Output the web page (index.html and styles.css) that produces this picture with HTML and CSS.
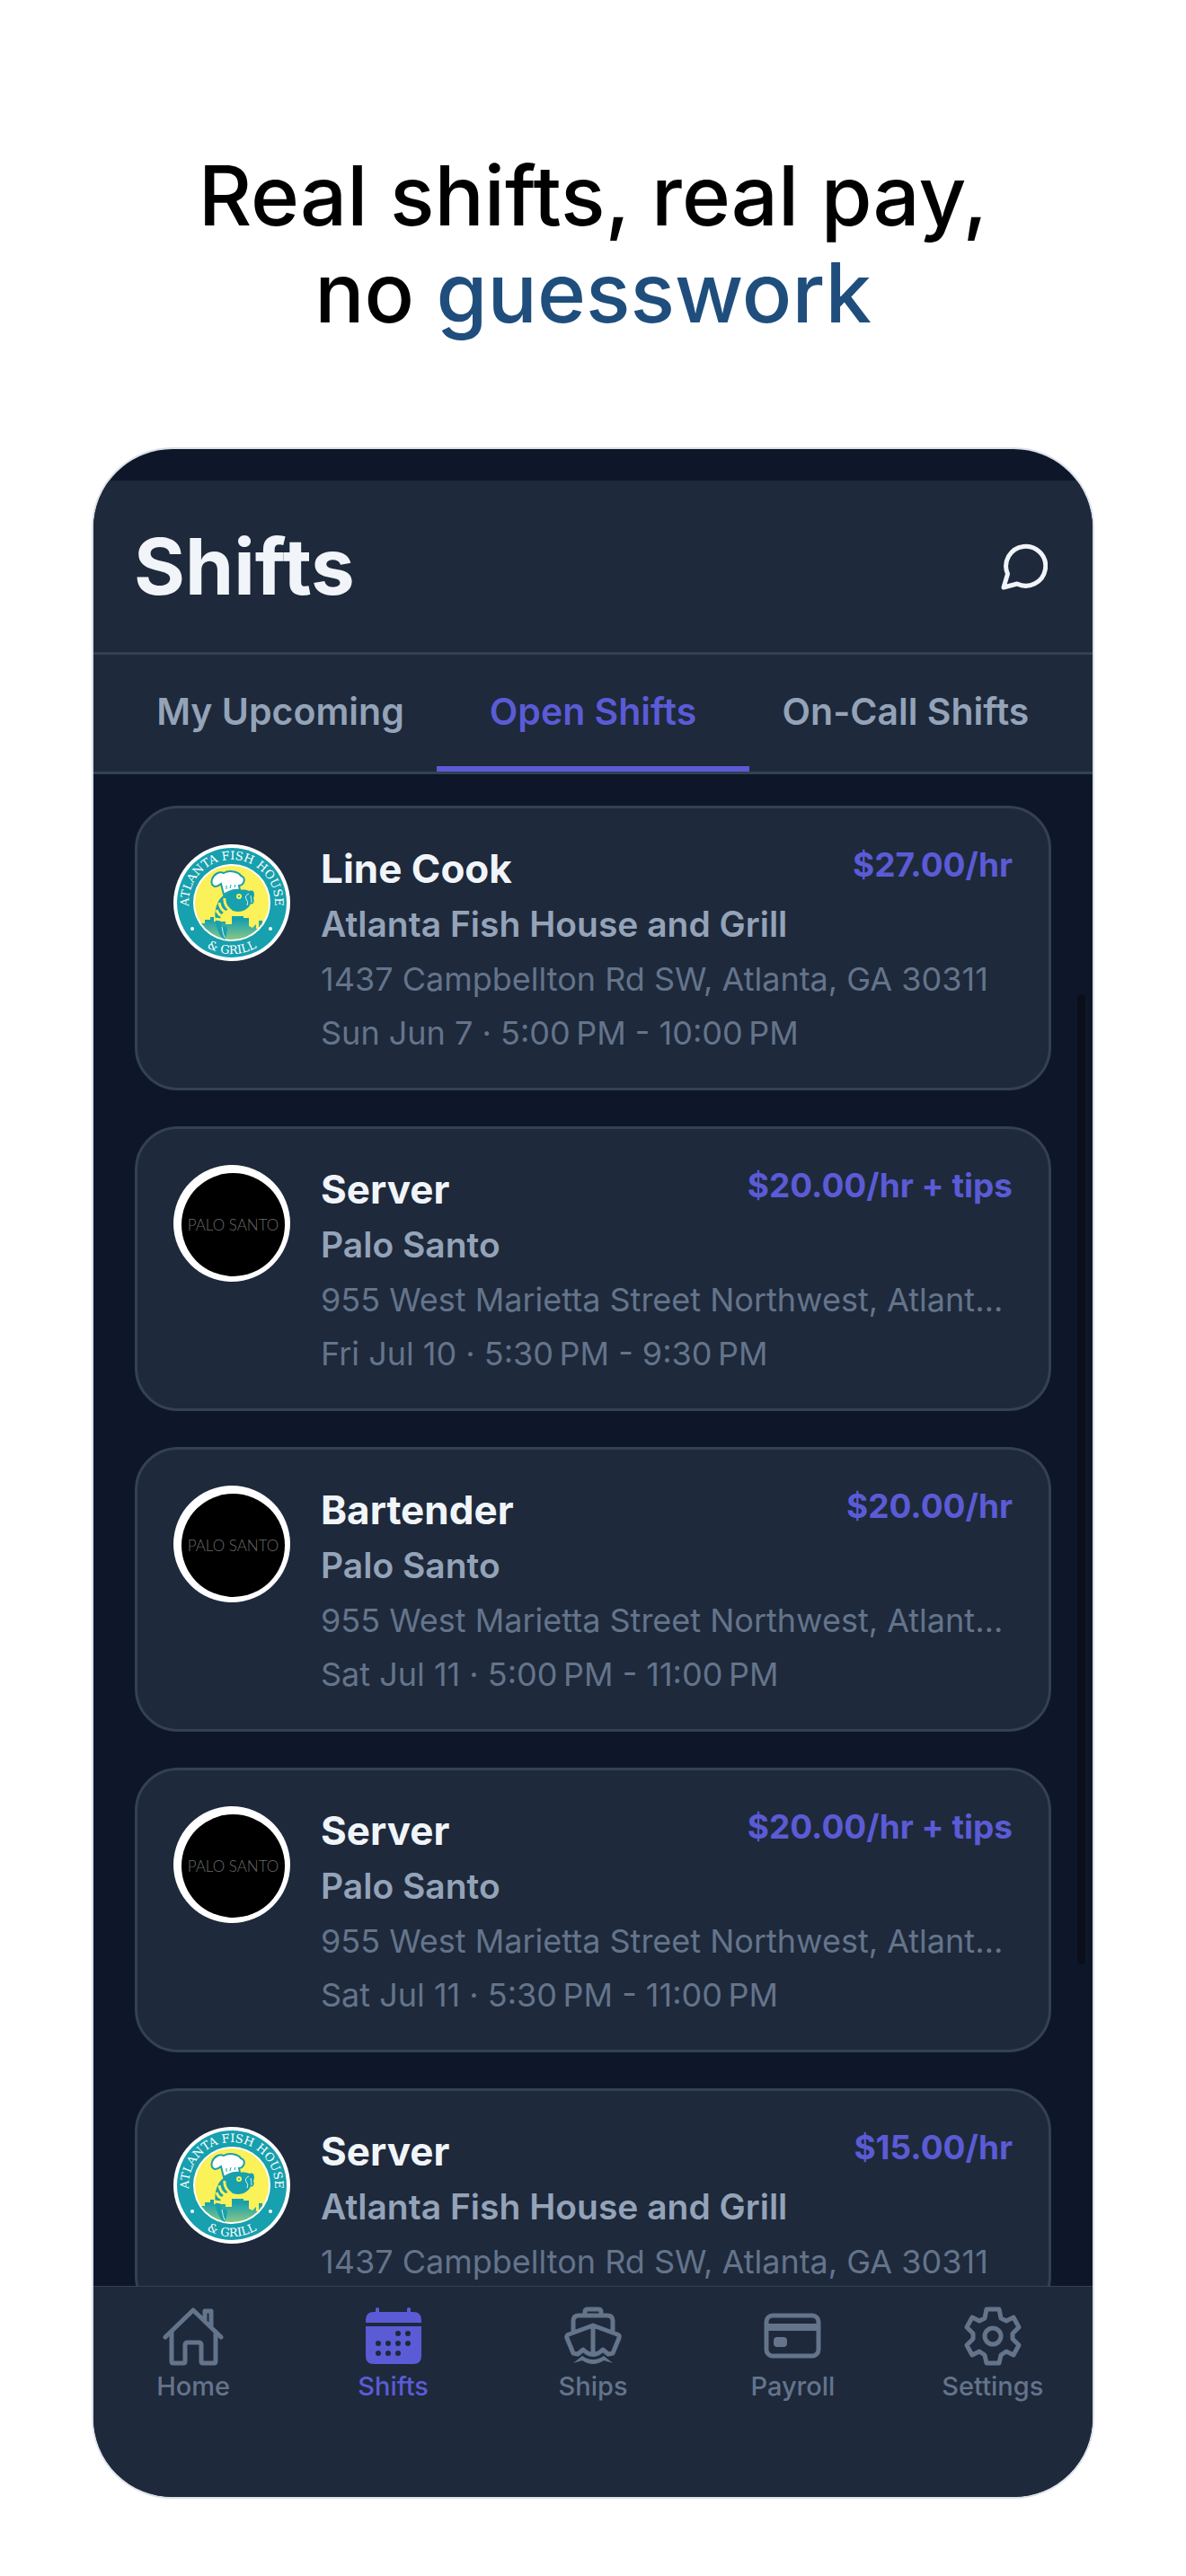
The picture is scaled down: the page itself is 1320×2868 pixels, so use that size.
FILE: index.html
```
<!DOCTYPE html>
<html lang="en">
<head>
  <meta charset="UTF-8" />
  <meta name="viewport" content="width=device-width, initial-scale=1" />
  <title>Shifts</title>
  <link rel="stylesheet" href="styles.css">
</head>
<body>
  <!-- fish logo artwork, used by the shift cards -->
  <svg class="sprite" aria-hidden="true">
    <defs>
      <linearGradient id="skyline" x1="0" y1="0" x2="0" y2="1">
        <stop offset="0.1" stop-color="#17a0ae" />
        <stop offset="1" stop-color="#d9e46a" />
      </linearGradient>
      <clipPath id="inner"><circle cx="65" cy="65" r="41" /></clipPath>
      <path id="arc-top" d="M21.500 85.300 A48 48 0 1 1 108.500 85.300" />
      <path id="arc-bottom" d="M15.600 93.500 A57 57 0 0 0 114.400 93.500" />
    </defs>
    <symbol id="fish-house" viewBox="0 0 130 130">
      <circle cx="65" cy="65" r="65" fill="#fff" />
      <circle cx="65" cy="65" r="61" fill="#17a0ae" />
      <circle cx="65" cy="65" r="43" fill="#fff" />
      <circle cx="65" cy="65" r="41" fill="#fbf158" />
      <g clip-path="url(#inner)">
        <path fill="url(#skyline)" d="M20 88h15v-4h6v-3h4v5h13v3h7v-9h13v2h6v9l4 2 4-4v5h3v-9h4v5h3v-5h4v7h8v30H20z" />
      </g>
      <path fill="#17a0ae" d="M56 57C64 50 80 49 85 52C90 50 91 56 89 60C91 64 88 68 86 66C82 76 69 77 63 72C52 75 50 84 54 92C60 89 62 94 57 106C48 102 43 78 49 66C51 61 53 59 56 57Z" />
      <path fill="none" stroke="#fbf158" stroke-width="3" d="M57 60q-1 8 7 14M51 65q1 8 8 11M48 73q2 6 7 7M46 83l7 1" />
      <path fill="none" stroke="#d6f2f0" stroke-width="1" d="M84 55q-5 2-3 6 3 3 1 7M86 57q1 5 1 8M54 92q1 7 3 12" />
      <circle cx="73" cy="58" r="3" fill="#fbf158" />
      <circle cx="73" cy="58" r="1" fill="#17a0ae" />
      <path fill="#fff" stroke="#17a0ae" stroke-width="2" d="M56 56l-3-12C46 50 41 46 43 39C45 33 51 30 56 32C63 28 73 31 75 35C82 37 78 46 73 46L74 51Q64 50 56 56Z" />
      <path fill="none" stroke="#17a0ae" stroke-width="1" d="M59 46v4M64 45l-1 4M69 45l-1 3" />
      <circle cx="21" cy="94" r="2" fill="#fff" />
      <circle cx="108" cy="94" r="2" fill="#fff" />
    </symbol>
  </svg>

  <div class="page">
    <h1 class="headline">Real shifts, real pay,<br>no <span>guesswork</span></h1>

    <div class="phone">
      <header class="header">
        <h2>Shifts</h2>
        <button class="chat-btn" aria-label="Messages">
          <svg viewBox="0 0 52 52"><path d="M3 49L7.500 34A22 22 0 1 1 18 45Z" /></svg>
        </button>
      </header>

      <div class="tabs">
        <button class="tab">My Upcoming</button>
        <button class="tab active">Open Shifts</button>
        <button class="tab">On-Call Shifts</button>
      </div>

      <main class="list">
        <article class="card">
          <svg class="avatar" viewBox="0 0 130 130">
            <use href="#fish-house" width="130" height="130" />
            <text><textPath href="#arc-top" startOffset="50%" text-anchor="middle">ATLANTA FISH HOUSE</textPath></text>
            <text><textPath href="#arc-bottom" startOffset="50%" text-anchor="middle">&amp; GRILL</textPath></text>
          </svg>
          <div class="info">
            <div class="top"><h3>Line Cook</h3><span class="pay">$27.00/hr</span></div>
            <p class="company">Atlanta Fish House and Grill</p>
            <p class="meta">1437 Campbellton Rd SW, Atlanta, GA 30311</p>
            <p class="meta">Sun Jun 7 · 5:00&#8239;PM - 10:00&#8239;PM</p>
          </div>
        </article>
        <article class="card">
          <div class="avatar palo"><span>PALO SANTO</span></div>
          <div class="info">
            <div class="top"><h3>Server</h3><span class="pay">$20.00/hr + tips</span></div>
            <p class="company">Palo Santo</p>
            <p class="meta">955 West Marietta Street Northwest, Atlanta, GA 30318</p>
            <p class="meta">Fri Jul 10 · 5:30&#8239;PM - 9:30&#8239;PM</p>
          </div>
        </article>
        <article class="card">
          <div class="avatar palo"><span>PALO SANTO</span></div>
          <div class="info">
            <div class="top"><h3>Bartender</h3><span class="pay">$20.00/hr</span></div>
            <p class="company">Palo Santo</p>
            <p class="meta">955 West Marietta Street Northwest, Atlanta, GA 30318</p>
            <p class="meta">Sat Jul 11 · 5:00&#8239;PM - 11:00&#8239;PM</p>
          </div>
        </article>
        <article class="card">
          <div class="avatar palo"><span>PALO SANTO</span></div>
          <div class="info">
            <div class="top"><h3>Server</h3><span class="pay">$20.00/hr + tips</span></div>
            <p class="company">Palo Santo</p>
            <p class="meta">955 West Marietta Street Northwest, Atlanta, GA 30318</p>
            <p class="meta">Sat Jul 11 · 5:30&#8239;PM - 11:00&#8239;PM</p>
          </div>
        </article>
        <article class="card">
          <svg class="avatar" viewBox="0 0 130 130">
            <use href="#fish-house" width="130" height="130" />
            <text><textPath href="#arc-top" startOffset="50%" text-anchor="middle">ATLANTA FISH HOUSE</textPath></text>
            <text><textPath href="#arc-bottom" startOffset="50%" text-anchor="middle">&amp; GRILL</textPath></text>
          </svg>
          <div class="info">
            <div class="top"><h3>Server</h3><span class="pay">$15.00/hr</span></div>
            <p class="company">Atlanta Fish House and Grill</p>
            <p class="meta">1437 Campbellton Rd SW, Atlanta, GA 30311</p>
          </div>
        </article>
        <div class="scrollbar"></div>
      </main>

      <nav class="tabbar">
        <a href="#home">
          <svg viewBox="0 0 68 68" class="line">
            <path d="M3 35L34 5L65 35M10 29V62Q10 64 12 64H23Q25 64 25 62V44Q25 41 28 41H40Q43 41 43 44V62Q43 64 45 64H57Q59 64 59 62V29M47 16V6H54V23" />
          </svg>
          Home
        </a>
        <a href="#shifts" class="active">
          <svg viewBox="0 0 68 68">
            <path fill="currentColor" d="M3 19V16Q3 7 12 7H14V4Q14 2 16 2T18 4V7H49V4Q49 2 51 2T53 4V7H56Q65 7 65 16V19ZM3 23H65V56Q65 65 56 65H12Q3 65 3 56Z" />
            <g class="dots"><circle cx="39" cy="31" r="3" /><circle cx="50" cy="31" r="3" /><circle cx="17" cy="42" r="3" /><circle cx="28" cy="42" r="3" /><circle cx="39" cy="42" r="3" /><circle cx="50" cy="42" r="3" /><circle cx="17" cy="53" r="3" /><circle cx="28" cy="53" r="3" /><circle cx="39" cy="53" r="3" /></g>
          </svg>
          Shifts
        </a>
        <a href="#ships">
          <svg viewBox="0 0 68 68" class="line">
            <path d="M25 10V7Q25 4 28 4H40Q43 4 43 7V10M12 30V17Q12 11 18 11H50Q56 11 56 17V30M34 22V54M34 22L61 32Q64 33 63 36L56 53L51 54L45 49Q34 60 23 49L17 54L12 53L5 36Q4 33 7 32Z" />
            <path fill="currentColor" stroke="none" d="M12 64L22 56Q34 64 46 56L56 64L46 61Q34 69 22 61Z" />
          </svg>
          Ships
        </a>
        <a href="#payroll">
          <svg viewBox="0 0 68 68" class="line">
            <rect x="5" y="11" width="58" height="45" rx="7" />
            <path fill="currentColor" stroke="none" d="M4 20H64V28H4ZM17 35H24Q28 35 28 39V42Q28 46 24 46H17Q13 46 13 42V39Q13 35 17 35Z" />
          </svg>
          Payroll
        </a>
        <a href="#settings">
          <svg viewBox="0 0 68 68" class="line">
            <path d="M27 4H41L43 14L49 17L57 13L63 24L56 31V37L63 44L57 55L49 51L43 55L41 64H27L25 55L19 51L11 55L5 44L12 37V31L5 24L11 13L19 17L25 14Z" />
            <circle cx="34" cy="34" r="9" />
          </svg>
          Settings
        </a>
      </nav>
    </div>
  </div>
</body>
</html>
```
FILE: styles.css
```
* {
  box-sizing: border-box;
}

body {
  margin: 0;
  background: #fff;
  font-family: Inter, "Liberation Sans", sans-serif;
}

h1, h2, h3, p {
  margin: 0;
}

button {
  border: none;
  background: none;
  padding: 0;
  font-family: inherit;
  cursor: pointer;
}

.sprite {
  position: absolute;
  width: 0;
  height: 0;
}

.page {
  display: flex;
  flex-direction: column;
  height: 100vh;
  padding: 164px 102px 86px;
}

.headline {
  margin-bottom: 118px;
  text-align: center;
  font-size: 92px;
  font-weight: 500;
  line-height: 108px;
  color: #000;
}

.headline span {
  color: #1f4e7d;
}

.phone {
  flex: 1;
  min-height: 0;
  display: flex;
  flex-direction: column;
  overflow: hidden;
  padding-top: 35px;
  border: 2px solid #dbe0e8;
  border-radius: 90px;
  background: #0e172a;
}

/* header */
.header {
  display: flex;
  justify-content: space-between;
  align-items: center;
  height: 194px;
  padding: 0 50px 0 45px;
  background: #1e293b;
  border-bottom: 3px solid #334155;
}

.header h2 {
  font-size: 87px;
  font-weight: 700;
  color: #f1f5f9;
}

.chat-btn svg {
  display: block;
  width: 52px;
  height: 52px;
  fill: none;
  stroke: #f1f5f9;
  stroke-width: 5;
  stroke-linejoin: round;
}

.tabs {
  display: flex;
  height: 133px;
  padding: 0 34px;
  background: #1e293b;
  border-bottom: 3px solid #334155;
}

.tab {
  flex: 1;
  padding-top: 1px;
  font-size: 41px;
  font-weight: 600;
  color: #94a3b8;
  border-bottom: 6px solid transparent;
}

.tab.active {
  color: #5b5bd6;
  border-bottom-color: #5b5bd6;
}

/* shift cards */
.list {
  position: relative;
  flex: 1;
  min-height: 0;
  overflow: hidden;
  display: flex;
  flex-direction: column;
  gap: 40px;
  padding: 35px 46px 0;
}

.card {
  flex: none;
  display: flex;
  gap: 34px;
  padding: 40px 40px 35px;
  background: #1e293b;
  border: 3px solid #334155;
  border-radius: 48px;
}

.avatar {
  flex: none;
  width: 130px;
  height: 130px;
}

.avatar text {
  font-family: "DejaVu Serif", serif;
  font-size: 13px;
  fill: #fff;
}

.palo {
  display: flex;
  padding: 9px 6px 6px 9px;
  border-radius: 50%;
  background: #fff;
}

.palo span {
  flex: 1;
  display: flex;
  align-items: center;
  justify-content: center;
  border-radius: 50%;
  background: #000;
  color: #6a6a6a;
  font-family: Lato, sans-serif;
  font-size: 17px;
  font-weight: 300;
  white-space: nowrap;
}

.info {
  flex: 1;
  min-width: 0;
  display: flex;
  flex-direction: column;
  gap: 8px;
}

.top {
  display: flex;
  justify-content: space-between;
}

.top h3 {
  font-size: 44px;
  font-weight: 700;
  line-height: 54px;
  color: #f1f5f9;
}

.pay {
  font-size: 37px;
  font-weight: 700;
  line-height: 46px;
  color: #5b5bd6;
}

.company {
  font-size: 39px;
  font-weight: 600;
  line-height: 54px;
  color: #94a3b8;
}

.meta {
  font-size: 36px;
  line-height: 52px;
  color: #64748b;
  white-space: nowrap;
  overflow: hidden;
  text-overflow: ellipsis;
}

.scrollbar {
  position: absolute;
  top: 245px;
  right: 8px;
  width: 9px;
  height: 1080px;
  border-radius: 5px;
  background: #0b0f19;
}

/* bottom navigation */
.tabbar {
  display: flex;
  height: 235px;
  padding-top: 21px;
  background: #1e293b;
  border-top: 1px solid #334155;
}

.tabbar a {
  flex: 1;
  display: flex;
  flex-direction: column;
  align-items: center;
  gap: 4px;
  font-size: 29px;
  font-weight: 500;
  line-height: 36px;
  color: #64748b;
  text-decoration: none;
}

.tabbar a.active {
  color: #5b5bd6;
}

.tabbar svg {
  width: 68px;
  height: 68px;
}

.line {
  fill: none;
  stroke: currentColor;
  stroke-width: 5;
  stroke-linecap: round;
  stroke-linejoin: round;
}

.dots {
  fill: #1e293b;
}
```
